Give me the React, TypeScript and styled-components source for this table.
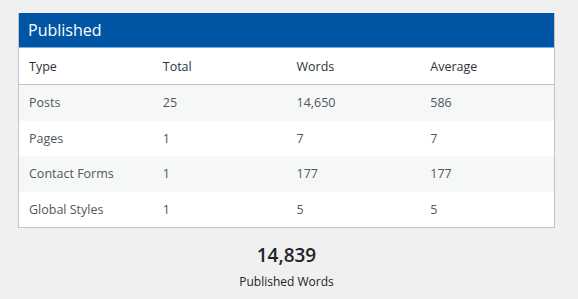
import styled, { createGlobalStyle } from 'styled-components'

const GlobalStyle = createGlobalStyle`
  html, body {
    margin: 0;
    padding: 0;
    background: #f0f0f1;
    font-family: "Open Sans", "Noto Sans", Arial, sans-serif;
  }
`

const Page = styled.div`
  padding: 13px 23px 0 18px;
  width: 537px;
`

const Card = styled.div`
  background: #fff;
  border: 1px solid #c3c4c7;
  border-top: none;
`

const Header = styled.div`
  background: #0055a4;
  color: #fff;
  height: 34px;
  display: flex;
  align-items: center;
  padding: 0 9px;
  font-size: 16px;
  border-bottom: 1px solid #72aee6;
`

const Table = styled.table`
  width: 100%;
  border-collapse: collapse;
  table-layout: fixed;
  font-size: 12.5px;
`

const Th = styled.th`
  text-align: left;
  font-weight: 400;
  color: #2c3338;
  height: 36px;
  padding: 0 10px;
  border-bottom: 1px solid #c3c4c7;
`

const Row = styled.tr<{ $alt?: boolean }>`
  background: ${({ $alt }) => ($alt ? '#f6f7f7' : '#fff')};
`

const Td = styled.td`
  color: #50575e;
  height: 35.5px;
  padding: 0 10px;
`

const Summary = styled.div`
  display: flex;
  flex-direction: column;
  align-items: center;
  margin-top: 14px;
`

const Big = styled.div`
  font-size: 19px;
  font-weight: 600;
  color: #1d2327;
`

const Caption = styled.div`
  font-size: 12px;
  color: #1d2327;
  margin-top: 5px;
`

const rows = [
  ['Posts', '25', '14,650', '586'],
  ['Pages', '1', '7', '7'],
  ['Contact Forms', '1', '177', '177'],
  ['Global Styles', '1', '5', '5'],
]

export default function App() {
  return (
    <>
      <GlobalStyle />
      <Page>
        <Card>
          <Header>Published</Header>
          <Table>
            <thead>
              <tr>
                <Th>Type</Th>
                <Th>Total</Th>
                <Th>Words</Th>
                <Th>Average</Th>
              </tr>
            </thead>
            <tbody>
              {rows.map((r, i) => (
                <Row key={r[0]} $alt={i % 2 === 0}>
                  {r.map((c, j) => (
                    <Td key={j}>{c}</Td>
                  ))}
                </Row>
              ))}
            </tbody>
          </Table>
        </Card>
        <Summary>
          <Big>14,839</Big>
          <Caption>Published Words</Caption>
        </Summary>
      </Page>
    </>
  )
}
